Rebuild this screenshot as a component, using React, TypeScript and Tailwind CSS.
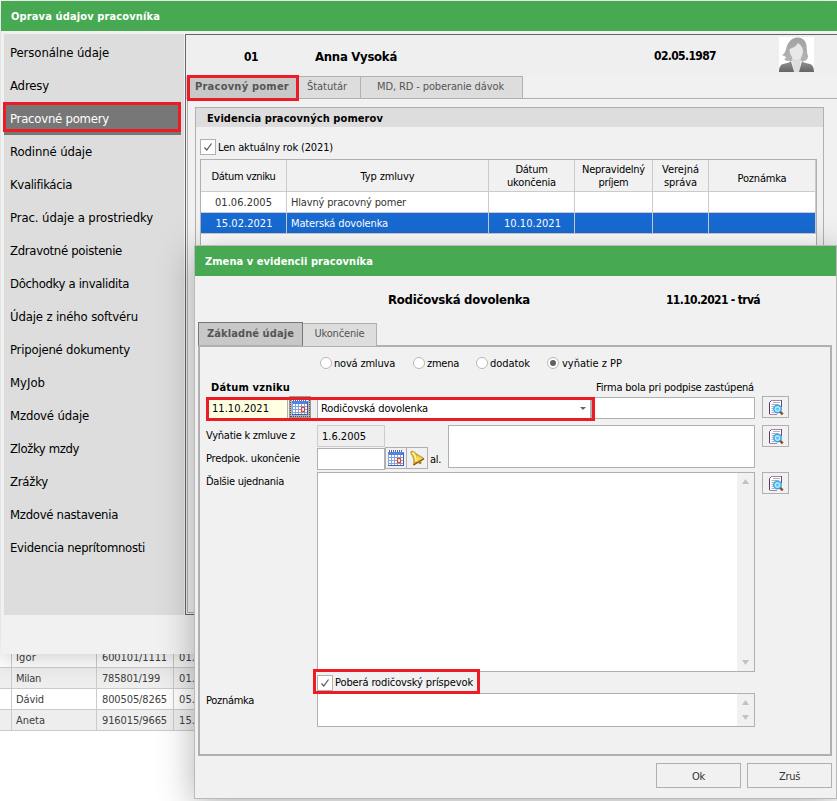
import React from 'react';

const menuItems = [
  { label: 'Personálne údaje', width: 99 },
  { label: 'Adresy', width: 39 },
  { label: 'Pracovné pomery', width: 99 },
  { label: 'Rodinné údaje', width: 82 },
  { label: 'Kvalifikácia', width: 62 },
  { label: 'Prac. údaje a prostriedky', width: 143 },
  { label: 'Zdravotné poistenie', width: 112 },
  { label: 'Dôchodky a invalidita', width: 119 },
  { label: 'Údaje z iného softvéru', width: 128 },
  { label: 'Pripojené dokumenty', width: 120 },
  { label: 'MyJob', width: 35 },
  { label: 'Mzdové údaje', width: 79 },
  { label: 'Zložky mzdy', width: 69 },
  { label: 'Zrážky', width: 38 },
  { label: 'Mzdové nastavenia', width: 108 },
  { label: 'Evidencia neprítomnosti', width: 135 },
];

const people = [
  { name: 'Igor', number: '600101/1111', date: '01.' },
  { name: 'Milan', number: '785801/199', date: '01.' },
  { name: 'Dávid', number: '800505/8265', date: '05.' },
  { name: 'Aneta', number: '916015/9665', date: '15.' },
];

const tableGrid = 'grid grid-cols-[86px_202px_86px_78px_56px_107px]';

interface TextProps {
  children: string;
  width: number;
  className?: string;
}

// Single line of text justified to an exact width
const Text: React.FC<TextProps> = ({ children, width, className = '' }) => {
  const ref = React.useRef<HTMLSpanElement>(null);
  const [spacing, setSpacing] = React.useState(0);

  React.useLayoutEffect(() => {
    if (!ref.current) return;
    const natural = ref.current.getBoundingClientRect().width;
    setSpacing((width - natural) / children.length);
  }, [children, width]);

  return (
    <span ref={ref} className={`inline-block shrink-0 whitespace-nowrap ${className}`} style={{ letterSpacing: `${spacing}px` }}>
      {children}
    </span>
  );
};

const Checkbox = () => (
  <span className="flex h-4 w-4 shrink-0 items-center justify-center border border-[#b0b0b0] bg-white">
    <svg width="10" height="10" viewBox="0 0 10 10" fill="none" stroke="#555" strokeWidth="1.2">
      <path d="M1.500 5.500 3.800 8 8.500 1.500" />
    </svg>
  </span>
);

const Radio = ({ checked = false }: { checked?: boolean }) => (
  <span className="flex h-3 w-3 shrink-0 items-center justify-center rounded-full border border-[#b8b8b8] bg-white">
    {checked && <span className="h-1.5 w-1.5 rounded-full bg-[#606060]"></span>}
  </span>
);

const CalendarIcon = () => (
  <svg width="18" height="17" viewBox="0 0 18 17">
    <rect x="1" y="1" width="16" height="15" fill="#fff" />
    <path d="M2 1h14" stroke="#667" strokeWidth="2" strokeDasharray="1 1" />
    <rect x="1" y="2" width="16" height="3" fill="#4a86e6" />
    <path d="M1 7.500h16M1 10.500h16M1 13.500h16M1.500 4v12M4.500 5v11M7.500 5v11M10.500 5v11M13.500 5v11" stroke="#86a2dc" />
    <path d="M1 15.500h16M16.500 3v13" stroke="#3c62b0" />
    <rect x="10.500" y="8.500" width="3" height="4" fill="#fff" stroke="#e8431f" strokeWidth="1.200" />
  </svg>
);

const BellIcon = () => (
  <svg width="17" height="17" viewBox="0 0 17 17">
    <path d="M2 1.500C4.500.5 6.500 3 8.500 4.500c2 1.600 4 1.800 6.500 4L4.500 15C5 11 5 9 3.500 6 2.800 4.500 1 2.500 2 1.500Z" fill="#dcb02a" stroke="#a07a18" strokeWidth=".6" />
    <path d="M3.500 2.500c2 2 3.800 4 3.500 9" stroke="#fff39a" strokeWidth="2" fill="none" />
    <path d="M8 5.500c2 1.700 4 2 5.500 3L8 11.500" fill="#f4d95a" />
    <path d="M4.500 15 15 8.800" stroke="#7b560f" strokeWidth="1.300" />
    <circle cx="11" cy="12.500" r="1.500" fill="#b77a12" />
  </svg>
);

const PreviewIcon = () => (
  <svg width="16" height="17" viewBox="0 0 16 17">
    <path d="M3.500 1.500H13.500V15.500H1.500V3.500Z" fill="#fff" />
    <path d="M1.500 15V3.500L3.500 1.500" stroke="#5b3868" fill="none" />
    <path d="M3 1.500H13M1.500 15.500H9" stroke="#9d86aa" fill="none" />
    <path d="M13.500 1v7" stroke="#6a4a76" fill="none" />
    <path d="M5 3.500h7M3.500 5.500h7M3.500 7.500h3M3.500 9.500h2M3.500 11.500h2M3.500 13.500h3" stroke="#b4b4b4" />
    <circle cx="9.500" cy="10" r="3.700" fill="#b5e7ff" stroke="#35a4ee" strokeWidth="1.500" />
    <circle cx="9.500" cy="10" r="1.500" fill="#5cc3f6" />
    <path d="m12.200 12.800 2.500 2.500" stroke="#8b4a20" strokeWidth="2.400" />
  </svg>
);

const Avatar = () => (
  <svg width="35" height="35" viewBox="0 0 35 35">
    <defs>
      <linearGradient id="hair" x1="0" y1="0" x2="0" y2="1">
        <stop offset="0" stopColor="#a2a2a2" />
        <stop offset="1" stopColor="#b4b4b4" />
      </linearGradient>
      <linearGradient id="suit" x1="0" y1="0" x2="0" y2="1">
        <stop offset="0" stopColor="#949494" />
        <stop offset="1" stopColor="#656565" />
      </linearGradient>
    </defs>
    <rect width="35" height="35" fill="#fff" />
    <path d="M11 4C14 0 21-1 25 3c4 4 2 11 4 16 0 2-1 4-3 5H9c-2 0-3-1-4-2 1 0 2-1 2-2l-4-2c5-2 3-9 8-14Z" fill="url(#hair)" />
    <path d="M13 20h9l-1 15h-7Z" fill="#dedede" />
    <path d="M10.500 12c4-1 7-3 8.500-6 3 2 5 5 5 8 0 5-3 9-6.500 9s-7-5-7-11Z" fill="#e8e8e8" />
    <path d="m12 24 3 11H0c0-4 1-7 4-8 3-1 6-1 8-3ZM23 24l-3 11h15c0-4-1-7-4-8-3-1-6-1-8-3Z" fill="url(#suit)" />
  </svg>
);

const IconButton = ({ children, className = '' }: { children: React.ReactNode; className?: string }) => (
  <button className={`flex h-[22px] shrink-0 items-center justify-center border border-[#b0b0b0] bg-[#f1f1f1] ${className}`}>
    {children}
  </button>
);

const ScrollBar = () => (
  <div className="flex w-[17px] flex-col items-center justify-between bg-[#f1f1f1] py-1.5 text-[#c3c3c3]">
    <svg width="7" height="5" fill="currentColor"><path d="M0 5 3.500 0 7 5Z" /></svg>
    <svg width="7" height="5" fill="currentColor"><path d="M0 0h7L3.500 5Z" /></svg>
  </div>
);

const Highlight = ({ className }: { className: string }) => (
  <div className={`pointer-events-none absolute z-10 border-[3px] border-[#ed1c24] ${className}`}></div>
);

const PeopleList = () => (
  <div className="flex h-[801px] flex-col bg-white pt-[647px]">
    {people.map((person, index) => (
      <div
        key={person.name}
        className={`grid h-[21px] shrink-0 grid-cols-[12px_85px_77px_1fr] border-b border-[#cbcbcb] leading-[22px] text-[#404040] ${
          index % 2 ? 'bg-[#eeeeee]' : 'bg-white'
        }`}
      >
        <span className="h-5 border-r border-[#cbcbcb]"></span>
        <span className="h-5 border-r border-[#cbcbcb] pl-1">
          <Text width={[20, 25, 28, 29][index]}>{person.name}</Text>
        </span>
        <span className="h-5 border-r border-[#cbcbcb] pl-[5px]">
          <Text width={index === 1 ? 58 : 65}>{person.number}</Text>
        </span>
        <span className="h-5 pl-[5px]"><Text width={16}>{person.date}</Text></span>
      </div>
    ))}
  </div>
);

const Sidebar = () => (
  <nav className="relative h-[581px] w-[180px] shrink-0 bg-[#dddddd] pt-0.5 text-[13px]">
    {menuItems.map((item, index) => (
      <div
        key={item.label}
        className={`flex h-[33px] items-center pl-1.5 ${
          index === 2 ? 'mr-[3px] border-t border-[#dddddd] bg-[#777777] text-white' : 'text-black'
        }`}
      >
        <Text width={item.width}>{item.label}</Text>
      </div>
    ))}
    <Highlight className="-left-px top-[68px] h-[30px] w-[178px]" />
  </nav>
);

const ContractTable = () => (
  <div className="ml-1 mt-1 h-[160px] w-[617px] border border-[#b0b0b0] bg-white">
    <div className={`${tableGrid} h-8 border-b border-[#cbcbcb] bg-[#f1f1f1] text-center leading-[13px] text-black [&>div]:flex [&>div]:flex-col [&>div]:items-center [&>div]:justify-center [&>div]:border-r [&>div]:border-[#cbcbcb]`}>
      <div className="pt-px"><Text width={64}>Dátum vzniku</Text></div>
      <div className="pt-px"><Text width={54}>Typ zmluvy</Text></div>
      <div className="pt-px"><Text width={32}>Dátum</Text><Text width={49}>ukončenia</Text></div>
      <div className="pt-px"><Text width={63}>Nepravidelný</Text><Text width={30}>príjem</Text></div>
      <div className="pt-px"><Text width={37}>Verejná</Text><Text width={33}>správa</Text></div>
      <div className="pt-1.5"><Text width={49}>Poznámka</Text></div>
    </div>
    <div className={`${tableGrid} h-[21px] border-b border-[#cbcbcb] leading-[22px] text-[#333333] [&>div]:h-5 [&>div]:border-r [&>div]:border-[#cbcbcb]`}>
      <div className="text-center"><Text width={57}>01.06.2005</Text></div>
      <div className="pl-1"><Text width={115}>Hlavný pracovný pomer</Text></div>
      <div></div><div></div><div></div><div></div>
    </div>
    <div className={`${tableGrid} h-[21px] border-b border-[#cbcbcb] bg-[#186bd3] leading-[22px] text-white [&>div]:h-5 [&>div]:border-r [&>div]:border-[#cbcbcb]`}>
      <div className="pl-px text-center"><Text width={57}>15.02.2021</Text></div>
      <div className="pl-1"><Text width={97}>Materská dovolenka</Text></div>
      <div className="pl-0.5 text-center"><Text width={57}>10.10.2021</Text></div>
      <div></div><div></div><div></div>
    </div>
  </div>
);

const EmployeeWindow = () => (
  <section className="absolute left-px top-px h-[653px] w-[836px] overflow-hidden bg-[#f1f1f1] shadow-[0_2px_25px_rgba(0,0,0,0.22)]">
    <header className="flex h-[30px] items-center bg-[#47aa52] pl-2.5 pt-px font-bold text-white">
      <Text width={149}>Oprava údajov pracovníka</Text>
    </header>
    <div className="flex pl-[3px] pt-[3px]">
      <Sidebar />
      <main className="relative ml-px h-[581px] w-[660px] border-y border-l border-[#666666]">
        <div className="flex h-[41px] items-start bg-[#efefef] text-[13px] font-bold text-black">
          <span className="ml-[58px] mt-[14px] w-[71px] text-[12px]"><Text width={14}>01</Text></span>
          <span className="mt-[14px] w-[339px]"><Text width={82}>Anna Vysoká</Text></span>
          <span className="mt-[13px] w-[125px] text-[12px]"><Text width={62}>02.05.1987</Text></span>
          <span className="mt-0.5"><Avatar /></span>
        </div>
        <div className="flex h-[23px] border-b border-[#b0b0b0] text-[#555555]">
          <div className="flex w-[113px] items-center bg-[#c8c8c8] pb-px pl-[9px] font-bold">
            <Text width={94}>Pracovný pomer</Text>
          </div>
          <div className="flex w-[62px] items-center border-r border-t border-[#b0b0b0] bg-[#dddddd] pb-px pl-2">
            <Text width={40}>Štatutár</Text>
          </div>
          <div className="flex w-[162px] items-center border-r border-t border-[#b0b0b0] bg-[#dddddd] pb-px pl-4">
            <Text width={127}>MD, RD - poberanie dávok</Text>
          </div>
        </div>
        <Highlight className="left-px top-[40px] h-[26px] w-[112px]" />
        <div className="ml-px h-[514px] border-b border-l border-[#b0b0b0] pl-[7px] pt-2">
          <div className="h-[480px] w-[629px] border border-[#b0b0b0]">
            <h2 className="flex h-[19px] items-center bg-[#dddddd] pl-[11px] pt-[3px] font-bold text-black">
              <Text width={176}>Evidencia pracovných pomerov</Text>
            </h2>
            <div className="ml-1 mt-3 flex h-4 items-center gap-0.5 text-black">
              <Checkbox />
              <Text className="pt-px" width={115}>Len aktuálny rok (2021)</Text>
            </div>
            <ContractTable />
          </div>
        </div>
      </main>
    </div>
  </section>
);

const ChangeForm = () => (
  <div className="relative -mt-px ml-[3px] h-[411px] w-[634px] border-2 border-[#b0b0b0]">
    <div className="flex h-[31px] items-center pl-[120px]">
      <label className="flex w-[93px] items-center gap-0.5"><Radio /><Text className="pt-0.5" width={61}>nová zmluva</Text></label>
      <label className="flex w-[63px] items-center gap-0.5"><Radio /><Text className="pt-0.5" width={32}>zmena</Text></label>
      <label className="flex w-[71px] items-center gap-[2px]"><Radio /><Text className="pt-0.5" width={40}>dodatok</Text></label>
      <label className="flex items-center gap-[3px]"><Radio checked /><Text className="pt-0.5" width={60}>vyňatie z PP</Text></label>
    </div>
    <div className="flex h-[18px] w-[554px] items-center justify-between pl-[11px] pt-px">
      <span className="font-bold"><Text width={79}>Dátum vzniku</Text></span>
      <Text width={158}>Firma bola pri podpise zastúpená</Text>
    </div>
    <div className="flex h-[29px]">
      <div className="ml-2 mt-0.5 flex h-5 w-20 items-center border-r border-[#b0b0b0] bg-[#ffffe1] pl-1 pt-px">
        <Text width={57}>11.10.2021</Text>
      </div>
      <button className="ml-px flex h-[22px] w-[22px] items-center justify-center border border-[#999999] bg-[#b5b5b5]">
        <span className="border border-dotted border-[#555555]"><CalendarIcon /></span>
      </button>
      <div className="ml-1.5 mt-px flex h-[22px] w-[274px] items-center justify-between border border-[#b0b0b0] bg-white pl-[3px] pr-1">
        <Text className="pt-0.5" width={107}>Rodičovská dovolenka</Text>
        <svg width="6" height="3" fill="#666"><path d="M0 0h6L3 3Z" /></svg>
      </div>
      <div className="mt-px h-[22px] w-[164px] border border-[#b0b0b0] bg-white"></div>
      <IconButton className="ml-[7px] w-[27px]"><PreviewIcon /></IconButton>
    </div>
    <Highlight className="left-[6px] top-[50px] h-6 w-[389px]" />
    <div className="flex h-[47px]">
      <div className="w-[248px]">
        <div className="flex h-[22px] items-center">
          <span className="w-[117px] pl-1.5"><Text width={89}>Vyňatie k zmluve z</Text></span>
          <span className="flex h-[22px] w-[68px] items-center border border-[#cccccc] bg-[#efefef] pl-1 pt-px"><Text width={44}>1.6.2005</Text></span>
        </div>
        <div className="flex h-6">
          <span className="w-[117px] pl-1.5 pt-1"><Text width={94}>Predpok. ukončenie</Text></span>
          <span className="mt-px h-[22px] w-[68px] border border-[#b0b0b0] bg-white"></span>
          <IconButton className="w-[22px]"><CalendarIcon /></IconButton>
          <IconButton className="-ml-px w-[22px]"><BellIcon /></IconButton>
          <span className="ml-0.5 mt-[5px]"><Text width={11}>al.</Text></span>
        </div>
      </div>
      <div className="h-[43px] w-[307px] border border-[#b0b0b0] bg-white"></div>
      <IconButton className="ml-[7px] w-[27px]"><PreviewIcon /></IconButton>
    </div>
    <div className="flex h-[200px]">
      <span className="w-[117px] pl-1.5 pt-0.5"><Text width={78}>Ďalšie ujednania</Text></span>
      <div className="flex w-[438px] justify-end border border-[#b0b0b0] bg-white"><ScrollBar /></div>
      <IconButton className="ml-[7px] w-[27px]"><PreviewIcon /></IconButton>
    </div>
    <div className="ml-[117px] flex h-[21px] items-center gap-0.5">
      <Checkbox />
      <Text width={138}>Poberá rodičovský príspevok</Text>
    </div>
    <Highlight className="left-[113px] top-[322px] h-[25px] w-[167px]" />
    <div className="flex h-[34px]">
      <span className="w-[117px] pl-1.5"><Text width={48}>Poznámka</Text></span>
      <div className="flex w-[438px] justify-end border border-[#b0b0b0] bg-white"><ScrollBar /></div>
    </div>
  </div>
);

const ChangeWindow = () => (
  <section className="absolute left-[194px] top-[245px] h-[554px] w-[643px] border border-[#b9b9b9] bg-[#f1f1f1] text-black shadow-[0_6px_34px_rgba(0,0,0,0.3)]">
    <header className="flex h-[30px] items-center bg-[#47aa52] pl-2.5 pt-px font-bold text-white">
      <Text width={168}>Zmena v evidencii pracovníka</Text>
    </header>
    <div className="flex h-[46px] items-center pl-[193px] pt-0.5 font-bold">
      <span className="w-[278px] text-[13px]"><Text width={142}>Rodičovská dovolenka</Text></span>
      <span className="text-[12px]"><Text width={94}>11.10.2021 - trvá</Text></span>
    </div>
    <div className="relative z-10 flex h-6 items-end pl-[3px] text-[#555555]">
      <div className="flex h-6 w-[105px] items-center justify-center border border-[#777777] border-b-[#b0b0b0] bg-[#c8c8c8] font-bold">
        <Text width={87}>Základné údaje</Text>
      </div>
      <div className="flex h-[23px] w-[74px] items-center justify-center border-r border-t border-[#b0b0b0] bg-[#dddddd] pb-0.5">
        <Text width={50}>Ukončenie</Text>
      </div>
    </div>
    <ChangeForm />
    <footer className="mr-1 mt-[7px] flex justify-end gap-1.5 text-[#333333]">
      <button className="h-[25px] w-[85px] border border-[#b0b0b0] pt-0.5"><Text width={13}>Ok</Text></button>
      <button className="h-[25px] w-[85px] border border-[#b0b0b0] pt-0.5"><Text width={21}>Zruš</Text></button>
    </footer>
  </section>
);

const App: React.FC = () => {
  return (
    <div className="relative h-[801px] w-[837px] overflow-hidden font-['DejaVu_Sans_Condensed','DejaVu_Sans','Noto_Sans',sans-serif] text-[11px] leading-[16px]">
      <PeopleList />
      <EmployeeWindow />
      <ChangeWindow />
    </div>
  );
};

export default App;
